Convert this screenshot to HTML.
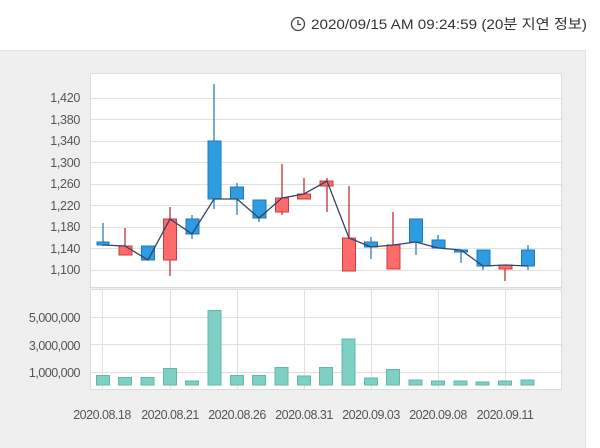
<!DOCTYPE html>
<html><head><meta charset="utf-8"><style>
html,body{margin:0;padding:0;background:#fff;width:600px;height:448px;overflow:hidden}
svg{display:block;font-family:"Liberation Sans","Noto Sans CJK KR",sans-serif}
</style></head><body>
<svg width="600" height="448" viewBox="0 0 600 448">
<rect x="0" y="50" width="586" height="398" fill="#efefef"/>
<line x1="0" y1="50.5" x2="586" y2="50.5" stroke="#e2e2e2"/>
<line x1="585.5" y1="50" x2="585.5" y2="448" stroke="#e2e2e2"/>
<circle cx="298" cy="24" r="6.5" fill="none" stroke="#444" stroke-width="1.3"/>
<path d="M298 20v4.5h3" fill="none" stroke="#444" stroke-width="1.3"/>
<text x="311" y="29" font-size="14" fill="#333" textLength="276" lengthAdjust="spacingAndGlyphs">2020/09/15 AM 09:24:59 (20분 지연 정보)</text>
<rect x="90.5" y="73.5" width="471" height="214" fill="#fff" stroke="#dcdcdc"/>
<g stroke="#e0e0e0" stroke-width="1">
<line x1="91" y1="98.5" x2="561" y2="98.5"/><line x1="91" y1="119.5" x2="561" y2="119.5"/>
<line x1="91" y1="141.5" x2="561" y2="141.5"/><line x1="91" y1="162.5" x2="561" y2="162.5"/>
<line x1="91" y1="184.5" x2="561" y2="184.5"/><line x1="91" y1="205.5" x2="561" y2="205.5"/>
<line x1="91" y1="227.5" x2="561" y2="227.5"/><line x1="91" y1="248.5" x2="561" y2="248.5"/>
<line x1="91" y1="270.5" x2="561" y2="270.5"/>
</g>
<g font-size="12.5" fill="#555" text-anchor="end" letter-spacing="-0.3">
<text x="80" y="102">1,420</text><text x="80" y="124">1,380</text><text x="80" y="145">1,340</text>
<text x="80" y="167">1,300</text><text x="80" y="188">1,260</text><text x="80" y="210">1,220</text>
<text x="80" y="231">1,180</text><text x="80" y="253">1,140</text><text x="80" y="274">1,100</text>
</g>
<g stroke-width="1.3">
<line x1="103" y1="223" x2="103" y2="246" stroke="#2a7fc0"/>
<line x1="125" y1="228" x2="125" y2="255" stroke="#b33"/>
<line x1="148" y1="246" x2="148" y2="260" stroke="#2a7fc0"/>
<line x1="170" y1="207" x2="170" y2="276" stroke="#b33"/>
<line x1="192" y1="215" x2="192" y2="239" stroke="#2a7fc0"/>
<line x1="214" y1="84" x2="214" y2="209" stroke="#2a7fc0"/>
<line x1="237" y1="183" x2="237" y2="215" stroke="#2a7fc0"/>
<line x1="259" y1="200" x2="259" y2="222" stroke="#2a7fc0"/>
<line x1="282" y1="164" x2="282" y2="215" stroke="#b33"/>
<line x1="304" y1="178" x2="304" y2="199" stroke="#b33"/>
<line x1="327" y1="178" x2="327" y2="212" stroke="#b33"/>
<line x1="349" y1="186" x2="349" y2="271" stroke="#b33"/>
<line x1="371" y1="237" x2="371" y2="259" stroke="#2a7fc0"/>
<line x1="393" y1="212" x2="393" y2="269" stroke="#b33"/>
<line x1="416" y1="219" x2="416" y2="255" stroke="#2a7fc0"/>
<line x1="438" y1="235" x2="438" y2="248" stroke="#2a7fc0"/>
<line x1="461" y1="250" x2="461" y2="263" stroke="#2a7fc0"/>
<line x1="483" y1="250" x2="483" y2="270" stroke="#2a7fc0"/>
<line x1="505" y1="265" x2="505" y2="281" stroke="#b33"/>
<line x1="528" y1="245" x2="528" y2="270" stroke="#2a7fc0"/>
</g>
<g stroke-width="1">
<g fill="#2f9be0" stroke="#1e78b8">
<rect x="97" y="242" width="12" height="3"/>
<rect x="141.5" y="246" width="13" height="14"/>
<rect x="186" y="219" width="13" height="15"/>
<rect x="208" y="141" width="13" height="58"/>
<rect x="230.5" y="187" width="13" height="12"/>
<rect x="253" y="200" width="13" height="18"/>
<rect x="364.5" y="242" width="13" height="5"/>
<rect x="409.5" y="219" width="13" height="23"/>
<rect x="432" y="240" width="13" height="8"/>
<rect x="454.5" y="250" width="13" height="2"/>
<rect x="477" y="250" width="13" height="16"/>
<rect x="521.5" y="250" width="13" height="16"/>
</g>
<g fill="#ff6a6a" stroke="#c83c3c">
<rect x="119" y="246" width="13" height="9"/>
<rect x="163.5" y="219" width="13" height="41"/>
<rect x="275.5" y="198" width="13" height="14"/>
<rect x="297.5" y="194" width="13" height="5"/>
<rect x="320" y="181" width="13" height="5"/>
<rect x="342.5" y="238" width="13" height="33"/>
<rect x="387" y="245" width="13" height="24"/>
<rect x="499" y="265" width="13" height="4"/>
</g>
</g>
<polyline fill="none" stroke="#334466" stroke-width="1.3" points="103,245 125,246 148,260 170,219 192,234 214,199 237,199 259,218 282,198 304,194 327,181 349,238 371,247 393,245 416,242 438,248 461,250 483,266 505,265 528,266"/>
<rect x="90.5" y="289.5" width="471" height="100" fill="#fff" stroke="#dcdcdc"/>
<g stroke="#e0e0e0">
<line x1="91" y1="317.5" x2="561" y2="317.5"/><line x1="91" y1="344.5" x2="561" y2="344.5"/><line x1="91" y1="372.5" x2="561" y2="372.5"/>
<line x1="102.5" y1="290" x2="102.5" y2="389"/><line x1="170.5" y1="290" x2="170.5" y2="389"/>
<line x1="237.5" y1="290" x2="237.5" y2="389"/><line x1="304.5" y1="290" x2="304.5" y2="389"/>
<line x1="371.5" y1="290" x2="371.5" y2="389"/><line x1="438.5" y1="290" x2="438.5" y2="389"/>
<line x1="505.5" y1="290" x2="505.5" y2="389"/>
</g>
<g font-size="12.5" fill="#555" text-anchor="end" letter-spacing="-0.5">
<text x="80" y="322">5,000,000</text><text x="80" y="350">3,000,000</text><text x="80" y="377">1,000,000</text>
</g>
<g fill="#7fd0c4" stroke="#5fb8aa">
<rect x="96.5" y="375.5" width="13" height="9.5"/>
<rect x="118.5" y="377.5" width="13" height="7.5"/>
<rect x="141" y="377.5" width="13" height="7.5"/>
<rect x="163.5" y="368.5" width="13" height="16.5"/>
<rect x="185.5" y="381" width="13" height="4"/>
<rect x="208" y="310.5" width="13" height="74.5"/>
<rect x="230.5" y="375.5" width="13" height="9.5"/>
<rect x="252.5" y="375.5" width="13" height="9.5"/>
<rect x="275" y="367.5" width="13" height="17.5"/>
<rect x="297.5" y="376" width="13" height="9"/>
<rect x="319.5" y="367.5" width="13" height="17.5"/>
<rect x="342" y="339" width="13" height="46"/>
<rect x="364.5" y="378" width="13" height="7"/>
<rect x="386.5" y="369.5" width="13" height="15.5"/>
<rect x="409" y="380" width="13" height="5"/>
<rect x="431.5" y="381" width="13" height="4"/>
<rect x="454" y="381" width="13" height="4"/>
<rect x="476" y="382" width="13" height="3"/>
<rect x="498.5" y="381" width="13" height="4"/>
<rect x="521" y="380" width="13" height="5"/>
</g>
<g font-size="12.5" fill="#555" text-anchor="middle" letter-spacing="-0.5">
<text x="102" y="419">2020.08.18</text><text x="170" y="419">2020.08.21</text>
<text x="237" y="419">2020.08.26</text><text x="304" y="419">2020.08.31</text>
<text x="371" y="419">2020.09.03</text><text x="438" y="419">2020.09.08</text>
<text x="505" y="419">2020.09.11</text>
</g>
</svg>
</body></html>
